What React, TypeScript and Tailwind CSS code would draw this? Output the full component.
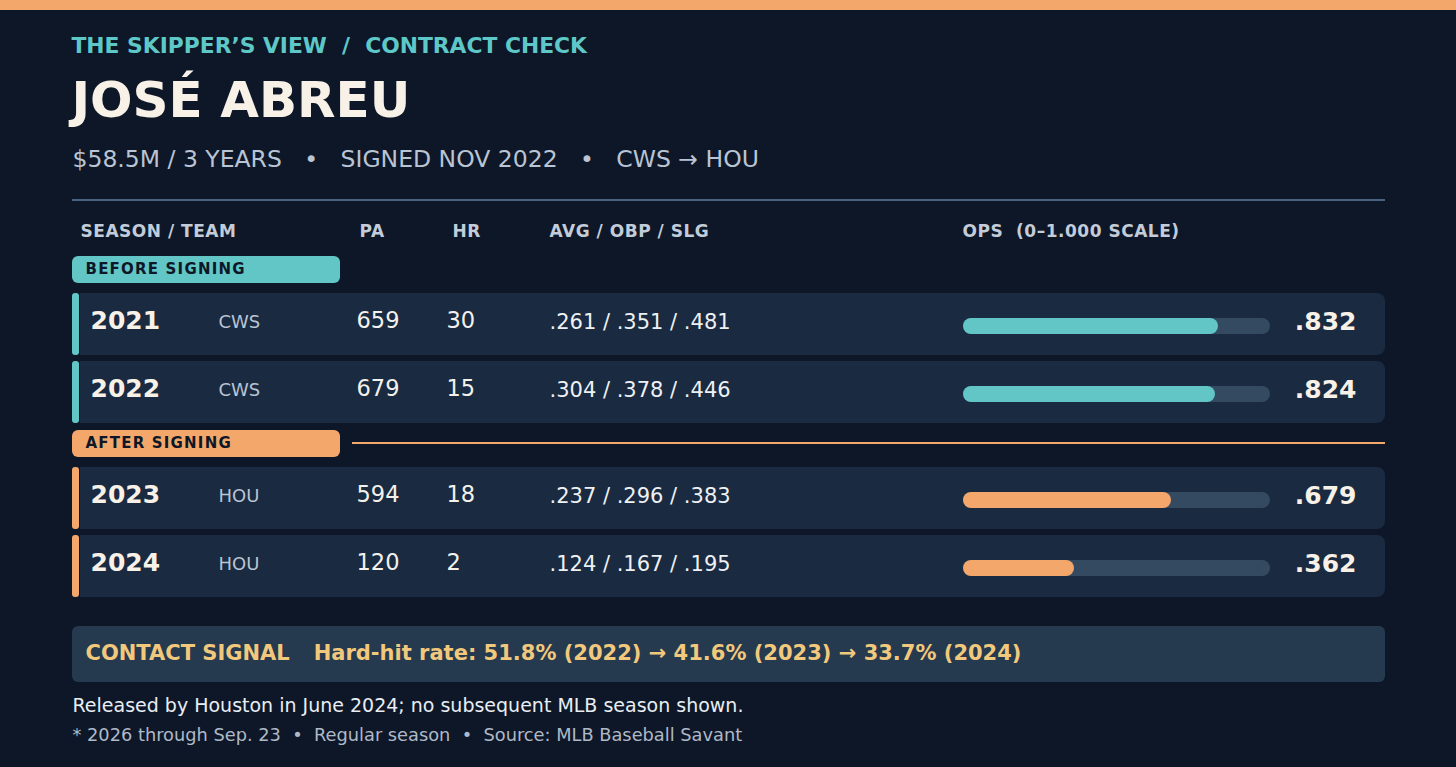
const FONT = "font-['DejaVu_Sans',_'Liberation_Sans',_sans-serif]";

interface Season {
    year: string;
    team: string;
    pa: string;
    hr: string;
    slash: string;
    ops: number;
}

const BEFORE: Season[] = [
    { year: '2021', team: 'CWS', pa: '659', hr: '30', slash: '.261 / .351 / .481', ops: 0.832 },
    { year: '2022', team: 'CWS', pa: '679', hr: '15', slash: '.304 / .378 / .446', ops: 0.824 },
];

const AFTER: Season[] = [
    { year: '2023', team: 'HOU', pa: '594', hr: '18', slash: '.237 / .296 / .383', ops: 0.679 },
    { year: '2024', team: 'HOU', pa: '120', hr: '2', slash: '.124 / .167 / .195', ops: 0.362 },
];

function SeasonRow({ s, tone }: { s: Season; tone: 'teal' | 'orange' }) {
    const accent = tone === 'teal' ? 'bg-[#62c6c6]' : 'bg-[#f4a76b]';
    // OPS shown without the leading zero, baseball style
    const opsLabel = '.' + s.ops.toFixed(3).split('.')[1];
    return (
        <div className="flex h-[62px]">
            <div className={`w-[7px] rounded-[3px] ${accent}`} />
            <div className="ml-[1px] flex flex-1 items-center rounded-r-[8px] bg-[#1a2a40] pl-[11px] pr-[28px]">
                <span className="w-[128px] -mt-[5px] text-[25px] font-bold text-[#f7f1e8]">{s.year}</span>
                <span className="w-[138px] -mt-[5px] text-[18px] text-[#b9c4d4]">{s.team}</span>
                <span className="w-[90px] -mt-[5px] text-[22.5px] text-[#f4f1ec]">{s.pa}</span>
                <span className="w-[103px] -mt-[5px] text-[22.5px] text-[#f4f1ec]">{s.hr}</span>
                <span className="w-[413px] -mt-[1px] text-[21px] text-[#eef1f4]">{s.slash}</span>
                <div className="mt-[4px] h-[16px] w-[307px] rounded-full bg-[#344a60]">
                    <div className={`h-full rounded-full ${accent}`} style={{ width: `${s.ops * 100}%` }} />
                </div>
                <span className="-mt-[3px] flex-1 text-right text-[25px] font-bold text-[#f7f1e8]">{opsLabel}</span>
            </div>
        </div>
    );
}

export default function App() {
    return (
        <div className={`${FONT} min-h-[767px] w-full bg-[#0e1727]`}>
            <div className="h-[10px] bg-[#f4a76b]" />
            <div className="mx-auto w-[1313px] pt-[22px]">
                <div className="text-[21.8px] font-bold leading-[28px] text-[#5ec8c8] whitespace-pre">
                    {'THE SKIPPER’S VIEW  /  CONTRACT CHECK'}
                </div>
                <h1 className="mt-[10px] text-[50px] font-bold leading-[60px] text-[#f7f1e8]">JOSÉ ABREU</h1>
                <div className="mt-[15px] pl-[1px] text-[23.5px] leading-[28px] text-[#b9c4d4] whitespace-pre">
                    {'$58.5M / 3 YEARS   •   SIGNED NOV 2022   •   CWS → HOU'}
                </div>

                <div className="mt-[26px] h-[1.5px] bg-[#4b6380]" />

                {/* column headers */}
                <div className="mt-[20px] flex pl-[9px] text-[17px] font-bold leading-[20px] tracking-[0.03em] text-[#c3ccd9]">
                    <span className="w-[279px]">SEASON / TEAM</span>
                    <span className="w-[93px]">PA</span>
                    <span className="w-[97px]">HR</span>
                    <span className="w-[413px]">AVG / OBP / SLG</span>
                    <span className="whitespace-pre">{'OPS  (0–1.000 SCALE)'}</span>
                </div>

                <div className="mt-[15px] flex h-[27px] w-[268px] items-center rounded-[6px] bg-[#62c6c6] pl-[14px] text-[15px] font-bold tracking-[0.08em] text-[#0e1727]">
                    BEFORE SIGNING
                </div>
                <div className="mt-[10px] flex flex-col gap-[6px]">
                    {BEFORE.map(s => <SeasonRow key={s.year} s={s} tone="teal" />)}
                </div>

                <div className="mt-[7px] flex items-center gap-[12px]">
                    <div className="flex h-[27px] w-[268px] items-center rounded-[6px] bg-[#f4a76b] pl-[14px] text-[15px] font-bold tracking-[0.08em] text-[#0e1727]">
                        AFTER SIGNING
                    </div>
                    <div className="h-[1.5px] flex-1 bg-[#f4a76b]" />
                </div>
                <div className="mt-[10px] flex flex-col gap-[6px]">
                    {AFTER.map(s => <SeasonRow key={s.year} s={s} tone="orange" />)}
                </div>

                <div className="mt-[29px] flex h-[56px] items-center rounded-[6px] bg-[#253a4f] pl-[14px] text-[21px] font-bold text-[#f2c97c] whitespace-pre">
                    <span>CONTACT SIGNAL</span>
                    <span className="ml-[24px]">Hard-hit rate: 51.8% (2022) → 41.6% (2023) → 33.7% (2024)</span>
                </div>

                <div className="mt-[10px] pl-[1px] text-[19px] leading-[26px] text-[#e8eef4]">
                    Released by Houston in June 2024; no subsequent MLB season shown.
                </div>
                <div className="mt-[5px] pl-[1px] text-[17.8px] leading-[24px] text-[#aeb9c8] whitespace-pre">
                    {'* 2026 through Sep. 23  •  Regular season  •  Source: MLB Baseball Savant'}
                </div>
            </div>
        </div>
    );
}
